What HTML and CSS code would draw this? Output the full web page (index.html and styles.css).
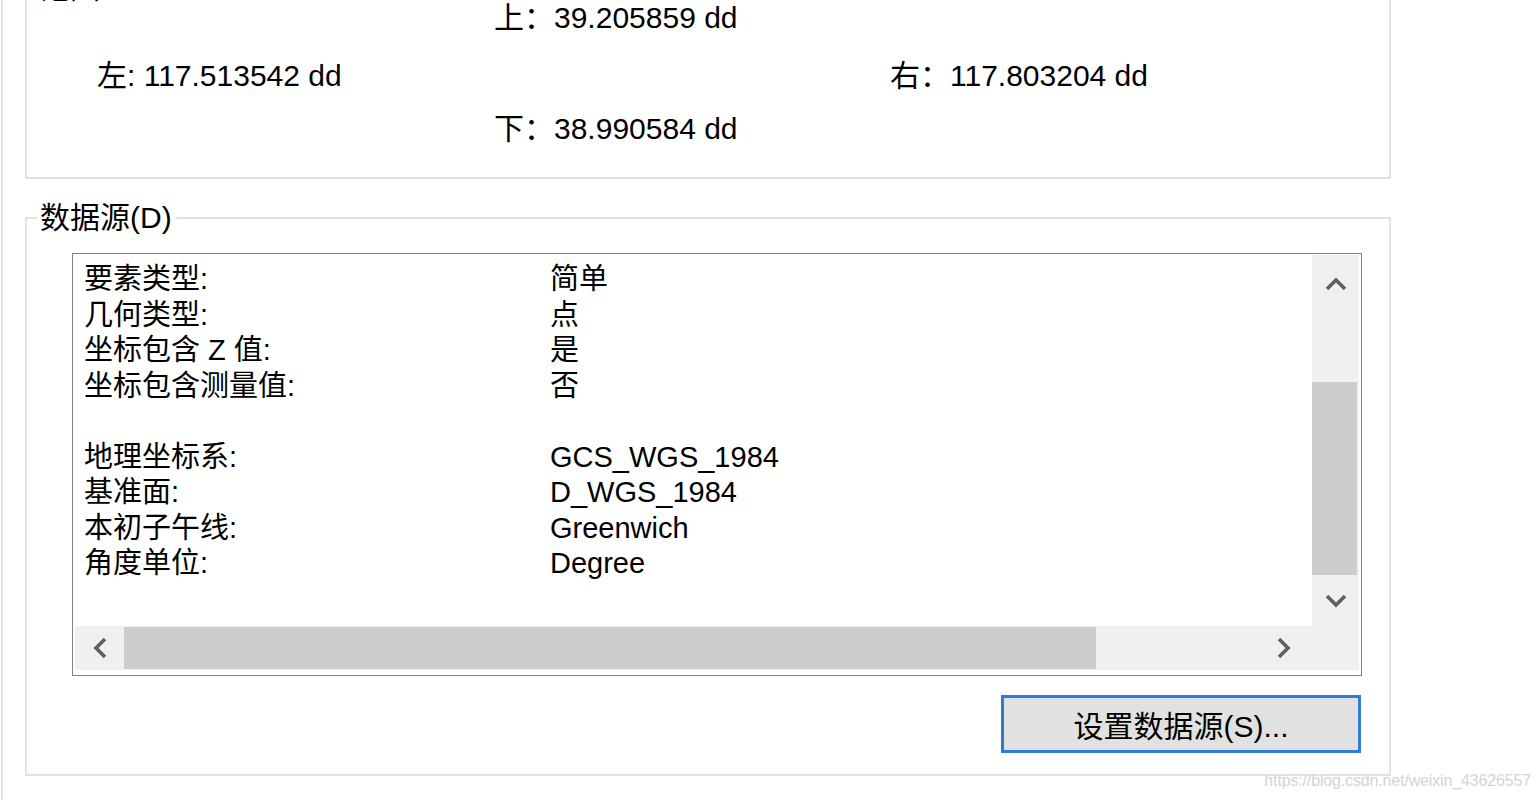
FILE: index.html
```html
<!DOCTYPE html>
<html lang="zh-CN">
<head>
  <meta charset="UTF-8">
  <title>图层属性 - 源</title>
  <link rel="stylesheet" href="styles.css">
</head>
<body>
  <div class="dialog">
    <fieldset class="group extent">
      <legend>范围</legend>
      <div class="extent-row row-top">
        <span></span>
        <span>上：39.205859 dd</span>
      </div>
      <div class="extent-row row-mid">
        <span>左: 117.513542 dd</span>
        <span></span>
        <span>右：117.803204 dd</span>
      </div>
      <div class="extent-row row-bottom">
        <span></span>
        <span>下：38.990584 dd</span>
      </div>
    </fieldset>

    <fieldset class="group source">
      <legend>数据源(D)</legend>
      <div class="listbox">
        <div class="list-view">
          <div class="props">
            <span>要素类型:</span><span>简单</span>
            <span>几何类型:</span><span>点</span>
            <span>坐标包含 Z 值:</span><span>是</span>
            <span>坐标包含测量值:</span><span>否</span>
            <span></span><span></span>
            <span>地理坐标系:</span><span>GCS_WGS_1984</span>
            <span>基准面:</span><span>D_WGS_1984</span>
            <span>本初子午线:</span><span>Greenwich</span>
            <span>角度单位:</span><span>Degree</span>
          </div>
        </div>

        <div class="vscroll">
          <div class="arrow arrow-up">
            <svg width="22" height="14" viewBox="0 0 22 14"><polyline points="2,12 11,3 20,12" /></svg>
          </div>
          <div class="track-gap"></div>
          <div class="thumb"></div>
          <div class="arrow arrow-down">
            <svg width="22" height="14" viewBox="0 0 22 14"><polyline points="2,2 11,11 20,2" /></svg>
          </div>
        </div>

        <div class="hscroll">
          <div class="arrow arrow-left">
            <svg width="14" height="22" viewBox="0 0 14 22"><polyline points="12,2 3,11 12,20" /></svg>
          </div>
          <div class="thumb"></div>
          <div class="track-fill"></div>
          <div class="arrow arrow-right">
            <svg width="14" height="22" viewBox="0 0 14 22"><polyline points="2,2 11,11 2,20" /></svg>
          </div>
        </div>

        <div class="corner"></div>
      </div>

      <div class="actions">
        <button class="btn">设置数据源(S)...</button>
      </div>
    </fieldset>
  </div>

  <div class="watermark">https://blog.csdn.net/weixin_43626557</div>
</body>
</html>
```

FILE: styles.css
```css
:root {
  --line-light: #e3e3e3;
  --list-border: #828282;
  --scroll-bg: #f0f0f0;
  --scroll-thumb: #cdcdcd;
  --arrow-color: #606060;
  --focus-blue: #2f7bd8;
  --button-bg: #e1e1e1;
}

* {
  box-sizing: border-box;
}

html, body {
  margin: 0;
  padding: 0;
  background: #fff;
  overflow: hidden;
}

body {
  font-family: "Liberation Sans", "Noto Sans CJK SC", sans-serif;
  color: #000;
  position: relative;
  min-height: 100vh;
}

.dialog {
  margin-left: 1px;
  border-left: 2px solid var(--line-light);
  padding-left: 22px;
  padding-top: 1px;
  min-height: 100vh;
}

/* group boxes */
.group {
  width: 1366px;
  margin: 0;
  padding: 0;
  border: 2px solid var(--line-light);
  min-inline-size: 0;
}
.group legend {
  font-size: 30px;
  line-height: 32px;
  padding: 0 3px;
  margin-left: 10px;
}
.source legend {
  line-height: 34px;
}

/* extent */
.extent {
  margin-top: -29px;
  padding-bottom: 30px;
}
.extent-row {
  display: grid;
  grid-template-columns: 397px 396px auto;
  padding-left: 70px;
  font-size: 30px;
  white-space: nowrap;
}
.row-top {
  height: 54px;
  line-height: 28px;
}
.row-mid {
  height: 53px;
  line-height: 36px;
}
.row-bottom {
  height: 36px;
  line-height: 36px;
}

/* data source */
.source {
  margin-top: 22px;
  padding: 18px 0 21px 0;
}

.listbox {
  width: 1290px;
  height: 423px;
  margin-left: 45px;
  border: 1px solid var(--list-border);
  padding: 1px 2px 5px 2px;
  display: grid;
  grid-template-columns: 1fr 47px;
  grid-template-rows: 1fr 44px;
  background: #fff;
}

.list-view {
  padding: 7px 0 0 9px;
  overflow: hidden;
}
.props {
  display: grid;
  grid-template-columns: 466px auto;
  grid-auto-rows: 35.5px;
  font-size: 29px;
  line-height: 35.5px;
  white-space: nowrap;
}

.vscroll {
  background: var(--scroll-bg);
  display: flex;
  flex-direction: column;
}
.vscroll .arrow-up {
  height: 58px;
}
.vscroll .track-gap {
  height: 69px;
}
.vscroll .thumb {
  height: 193px;
  margin-right: 2px;
  background: var(--scroll-thumb);
}
.vscroll .arrow-down {
  height: 51px;
}

.hscroll {
  background: var(--scroll-bg);
  display: flex;
}
.hscroll .arrow-left {
  width: 49px;
}
.hscroll .thumb {
  width: 972px;
  margin: 1px 0;
  background: var(--scroll-thumb);
}
.hscroll .track-fill {
  flex: 1;
}
.hscroll .arrow-right {
  width: 56px;
}

.arrow {
  display: flex;
  align-items: center;
  justify-content: center;
}
.arrow svg polyline {
  fill: none;
  stroke: var(--arrow-color);
  stroke-width: 3.6;
}

.corner {
  background: var(--scroll-bg);
}

.actions {
  display: flex;
  justify-content: flex-end;
  padding-right: 28px;
  margin-top: 19px;
}
.btn {
  width: 360px;
  height: 58px;
  border: 3px solid var(--focus-blue);
  background: var(--button-bg);
  font-family: inherit;
  font-size: 30px;
  color: #000;
  padding: 0;
}

.watermark {
  position: absolute;
  right: 9px;
  top: 771px;
  font-size: 16px;
  line-height: 20px;
  color: #d4d4d4;
  letter-spacing: -0.15px;
}
```
